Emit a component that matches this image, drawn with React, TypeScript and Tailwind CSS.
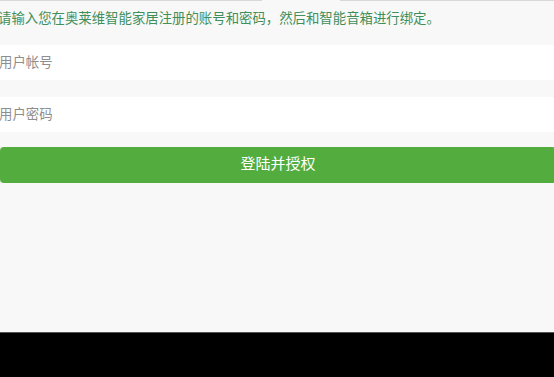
import React from "react";

export default function App() {
  const font = { fontFamily: '"Noto Sans CJK SC", "Noto Sans", sans-serif' };
  return (
    <div className="w-[554px] h-[377px] bg-black overflow-hidden" style={font}>
      <div className="h-[333px] bg-[#f8f8f8] border-b border-[#555] flex flex-col relative">
        <div className="absolute top-0 left-0 w-[262px] h-px bg-[#d8d8d8]" />
        <div className="absolute top-0 left-[340px] w-[214px] h-px bg-[#d8d8d8]" />
        <p className="h-[36px] leading-[34px] text-[13.4px] text-[#3f8f5c] ml-[-2px] whitespace-nowrap">
          请输入您在奥莱维智能家居注册的账号和密码，然后和智能音箱进行绑定。
        </p>
        <div className="flex flex-col gap-[17px] mt-[9px]">
          <div className="h-[35px] bg-white flex items-center pb-[2px] text-[13.4px] text-[#8e8e8e] ml-[-1px]">用户帐号</div>
          <div className="h-[35px] bg-white flex items-center pb-[2px] text-[13.4px] text-[#8e8e8e] ml-[-1px]">用户密码</div>
        </div>
        <button className="mt-[15px] h-[36px] w-[556px] bg-[#52ad3e] rounded-[4px] text-white text-[15px] flex items-center justify-center pb-[3px]">
          登陆并授权
        </button>
      </div>
    </div>
  );
}
